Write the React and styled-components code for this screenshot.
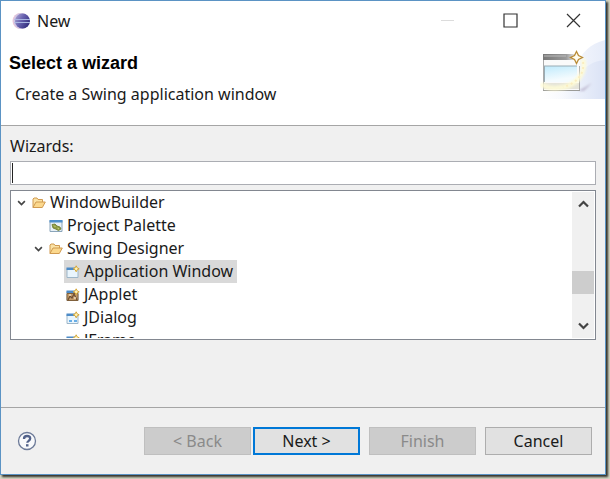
import React, { useState } from 'react'
import styled, { createGlobalStyle } from 'styled-components'

const treeItems = [
    { label: 'WindowBuilder', level: 0, icon: 'folder', open: true },
    { label: 'Project Palette', level: 1, icon: 'palette' },
    { label: 'Swing Designer', level: 1, icon: 'folder', open: true },
    { label: 'Application Window', level: 2, icon: 'window' },
    { label: 'JApplet', level: 2, icon: 'applet' },
    { label: 'JDialog', level: 2, icon: 'dialog' },
    { label: 'JFrame', level: 2, icon: 'window' },
]

function App() {
    const [selected, setSelected] = useState('Application Window')
    const [filter, setFilter] = useState('')

    return (
        <Page>
            <GlobalStyle />
            <Dialog role="dialog" aria-label="New">
                <TitleBar>
                    <EclipseLogo />
                    <Caption>New</Caption>
                    <WindowButton type="button" aria-label="Minimize" disabled>
                        <svg width="15" height="15" viewBox="0 0 15 15">
                            <path d="M1 7.5h13" stroke="#dcdcdc" />
                        </svg>
                    </WindowButton>
                    <WindowButton type="button" aria-label="Maximize">
                        <svg width="15" height="15" viewBox="0 0 15 15">
                            <path d="M1 1h13v13H1z" fill="none" stroke="#333" strokeWidth="1.2" />
                        </svg>
                    </WindowButton>
                    <WindowButton type="button" aria-label="Close">
                        <svg width="15" height="15" viewBox="0 0 15 15">
                            <path d="M1 1l13 13M14 1L1 14" stroke="#333" strokeWidth="1.2" />
                        </svg>
                    </WindowButton>
                </TitleBar>
                <Header>
                    <HeaderText>
                        <H1>Select a wizard</H1>
                        <Description>Create a Swing application window</Description>
                    </HeaderText>
                    <WizardBanner />
                </Header>
                <Content>
                    <Label htmlFor="wizards">Wizards:</Label>
                    <FilterInput
                        id="wizards"
                        type="text"
                        value={filter}
                        onChange={(e) => setFilter(e.target.value)}
                    />
                    <TreeBox>
                        <Tree role="tree" aria-label="Wizards">
                            {treeItems.map((item) => (
                                <Row
                                    key={item.label}
                                    role="treeitem"
                                    aria-level={item.level + 1}
                                    aria-selected={selected === item.label}
                                    $level={item.level}
                                    onClick={() => setSelected(item.label)}
                                >
                                    <Twisty>
                                        {item.open && <Chevron width={9} height={6} />}
                                    </Twisty>
                                    <RowLabel $selected={selected === item.label}>
                                        <ItemIcon name={item.icon} />
                                        <RowText>{item.label}</RowText>
                                    </RowLabel>
                                </Row>
                            ))}
                        </Tree>
                        <ScrollBar>
                            <ScrollButton type="button" aria-label="Scroll up">
                                <Chevron width={11} height={8} up />
                            </ScrollButton>
                            <ScrollTrack>
                                <ScrollThumb />
                            </ScrollTrack>
                            <ScrollButton type="button" aria-label="Scroll down">
                                <Chevron width={11} height={8} />
                            </ScrollButton>
                        </ScrollBar>
                    </TreeBox>
                </Content>
                <Footer>
                    <HelpButton type="button" aria-label="Help">
                        <HelpIcon />
                    </HelpButton>
                    <ButtonPair>
                        <Button type="button" disabled>&lt; Back</Button>
                        <Button type="button" $primary>Next &gt;</Button>
                    </ButtonPair>
                    <Button type="button" disabled>Finish</Button>
                    <Button type="button">Cancel</Button>
                </Footer>
            </Dialog>
        </Page>
    )
}

function Chevron({ width, height, up }) {
    return (
        <svg width={width} height={height} viewBox="0 0 11 8">
            <path
                d={up ? 'M1 6.5L5.5 2 10 6.5' : 'M1 1.5L5.5 6 10 1.5'}
                fill="none"
                stroke="#444"
                strokeWidth="2.2"
            />
        </svg>
    )
}

function EclipseLogo() {
    return (
        <svg width="20" height="18" viewBox="0 0 20 18">
            <defs>
                <linearGradient id="ball" x1="0" y1="0" x2="1" y2="0.6">
                    <stop offset="0" stopColor="#b5add8" />
                    <stop offset="0.5" stopColor="#6963b0" />
                    <stop offset="1" stopColor="#343080" />
                </linearGradient>
            </defs>
            <circle cx="9.5" cy="9" r="8" fill="#edc6d8" />
            <circle cx="10.5" cy="9" r="8" fill="#cfc6e4" />
            <circle cx="11.5" cy="9" r="7.5" fill="url(#ball)" />
            <path d="M3.5 7.5h15.500M3.5 10.500h15.500" stroke="#a9b6e2" />
        </svg>
    )
}

function WizardBanner() {
    return (
        <Banner width="65" height="60" viewBox="0 0 65 60" aria-hidden="true">
            <defs>
                <linearGradient id="swoosh" x1="0" y1="0" x2="1" y2="0">
                    <stop offset="0" stopColor="#fff" />
                    <stop offset="0.6" stopColor="#f1f4fc" />
                    <stop offset="1" stopColor="#e6ecf9" />
                </linearGradient>
                <linearGradient id="inner" x1="0" y1="0" x2="1" y2="0">
                    <stop offset="0" stopColor="#fff" stopOpacity="0" />
                    <stop offset="0.4" stopColor="#eef2fb" />
                    <stop offset="1" stopColor="#dae2f5" />
                </linearGradient>
                <linearGradient id="bar" x1="0" y1="0" x2="1" y2="0">
                    <stop offset="0" stopColor="#777" />
                    <stop offset="0.7" stopColor="#9a9a9a" />
                    <stop offset="1" stopColor="#eee" />
                </linearGradient>
                <linearGradient id="pane" x1="0" y1="0" x2="0.3" y2="1">
                    <stop offset="0" stopColor="#bfeafc" />
                    <stop offset="0.9" stopColor="#f4fbfe" />
                </linearGradient>
                <filter id="soft" x="-30%" y="-30%" width="160%" height="160%">
                    <feGaussianBlur stdDeviation="1.2" />
                </filter>
            </defs>
            <path d="M65 0C50 4 42 12 36 26L2 53v6h63z" fill="url(#swoosh)" />
            <path d="M65 20c-12 1-20 6-26 16-5 8-14 17-27 23h53z" fill="url(#inner)" />
            <path d="M38 51l14-8-8 8z" fill="#c3bfd6" filter="url(#soft)" />
            <path d="M3 15h37v36H3z" fill="#fafafa" />
            <path d="M3.500 15v36M39.500 26v25" stroke="#aaa" />
            <path d="M3 14h33v6H3z" fill="url(#bar)" />
            <path d="M4 16h22" stroke="#bbb" />
            <path d="M4 26h33v16H4z" fill="url(#pane)" />
            <path d="M4 26h33M4.500 26v16" stroke="#9aacb4" fill="none" />
            <path d="M4 43h35v6H4z" fill="#e5e4d9" />
            <path d="M3 50.500h37" stroke="#9b9b98" />
            <path d="M43 19c4 15-8 28-25 29-7 1-13-1-17-4" fill="none" stroke="#fffcd6" strokeWidth="5" opacity="0.85" filter="url(#soft)" />
            <path d="M43 22c2 13-8 22-20 25" fill="none" stroke="#faedc0" strokeWidth="2" strokeDasharray="2 3" />
            <path d="M36.500 11.500l2 4 4 2-4 2-2 4-2-4-4-2 4-2z" fill="#fffdf0" stroke="#b98b34" strokeWidth="1.300" />
        </Banner>
    )
}

function ItemIcon({ name }) {
    if (name === 'folder') {
        return (
            <svg width="14" height="14" viewBox="0 0 14 14">
                <path d="M1 11.500V3l1-1h3l1 1.500h4.500V6" fill="#fbe3a6" stroke="#d09a50" />
                <path d="M1 11.500L4 6h9.300l-3 5.500z" fill="#fbd88d" stroke="#d09a50" strokeLinejoin="round" />
            </svg>
        )
    }

    if (name === 'palette') {
        return (
            <svg width="14" height="14" viewBox="0 0 14 14">
                <path d="M1 1.500h12v11H1z" fill="#e8f0f7" stroke="#8aa5ba" />
                <path d="M0.500 1h13v2.500h-13z" fill="#4d8fcb" />
                <path d="M3 5.500l3-.5 2 2 3 1 1 2-2.500 1.500-3-1.500L4 9z" fill="#8c9a45" stroke="#6b7829" strokeWidth="0.800" />
                <path d="M5 6.500l1.500 1.500M8.500 9l1.500 1" stroke="#d0d77c" />
            </svg>
        )
    }

    return (
        <svg width="14" height="14" viewBox="0 0 14 14">
            <path d="M1 3.500h11v9H1z" fill="#e9f5fd" stroke="#9db6c9" />
            <path d="M0.500 2.500H9v2.500H0.500z" fill="#4d8bc7" />
            {name === 'dialog' && <path d="M3 10h3M8 10h3" stroke="#3e97e0" strokeWidth="1.500" />}
            {name === 'applet' && (
                <>
                    <path d="M1 5.500h11v7H1z" fill="#c39a68" stroke="#80603c" />
                    <path d="M2 12l2-4 2 2 2-4 3 6" fill="none" stroke="#6b4d32" strokeWidth="1.200" />
                    <path d="M3 7h2M8 10h2" stroke="#f1dfc0" strokeWidth="1.500" />
                </>
            )}
            <path d="M10.200 0.800l1 2 2 1-2 1-1 2-1-2-2-1 2-1z" fill="#fff3b8" stroke="#d6a637" />
        </svg>
    )
}

function HelpIcon() {
    return (
        <svg width="20" height="20" viewBox="0 0 20 20">
            <circle cx="10" cy="10" r="8.500" fill="#f8f9fb" stroke="#6c7a98" strokeWidth="1.300" />
            <path d="M7 8c0-2 1.300-3 3-3s3.200 1 3.200 2.600c0 2.200-2.900 2.200-2.900 4.200" fill="none" stroke="#52628a" strokeWidth="2.300" />
            <path d="M9 13.200h2.500v2.300H9z" fill="#52628a" />
        </svg>
    )
}

const GlobalStyle = createGlobalStyle`
    * {
        box-sizing: border-box;
    }

    body {
        margin: 0;
        background: #d6d6c2;
        color: #1a1a1a;
        font-family: 'Noto Sans', 'Open Sans', sans-serif;
        font-size: 16px;
        line-height: 22px;
    }

    button, input {
        font: inherit;
        color: inherit;
    }

    svg {
        display: block;
        flex: none;
    }
`

const Page = styled.div`
    display: flex;
    min-height: 100vh;
    padding: 0 4px 4px 0;
`

const Dialog = styled.div`
    flex: 1;
    display: flex;
    flex-direction: column;
    min-width: 0;
    background: #f0f0f0;
    border: 1px solid #5b93c4;
    box-shadow: 2px 2px 2px #33332b;
`

const TitleBar = styled.div`
    display: flex;
    align-items: center;
    height: 39px;
    padding-left: 10px;
    background: #fff;
`

const Caption = styled.span`
    flex: 1;
    padding-left: 6px;
`

const WindowButton = styled.button`
    display: flex;
    align-items: center;
    justify-content: center;
    width: 63px;
    height: 38px;
    padding: 0;
    border: 0;
    background: none;
`

const Header = styled.header`
    display: flex;
    justify-content: space-between;
    height: 86px;
    background: #fff;
    border-bottom: 1px solid #a5a5a5;
`

const HeaderText = styled.div`
    padding: 12px 0 0 8px;
`

const H1 = styled.h1`
    margin: 0;
    color: #000;
    font-family: 'Liberation Sans', Arial, sans-serif;
    font-size: 18px;
    line-height: 22px;
`

const Description = styled.p`
    margin: 9px 0 0 6px;
`

const Banner = styled.svg`
    display: block;
`

const Content = styled.main`
    flex: 1;
    display: flex;
    flex-direction: column;
    padding: 9px 9px 0;
`

const Label = styled.label`
    margin-bottom: 4px;
`

const FilterInput = styled.input`
    width: 100%;
    height: 24px;
    padding: 0 4px;
    border: 1px solid #abadb3;
    outline: 0;
    background: linear-gradient(#222, #222) 1px 1px / 1px 20px no-repeat #fff;
`

const TreeBox = styled.div`
    display: flex;
    height: 150px;
    margin-top: 5px;
    padding: 1px;
    border: 1px solid #828790;
    background: #fff;
`

const Tree = styled.div`
    flex: 1;
    overflow: hidden;
`

const Row = styled.div`
    display: flex;
    align-items: center;
    height: 23px;
    padding-left: ${({ $level }) => $level * 17}px;
    cursor: default;

    &:first-child {
        height: 22px;
    }
`

const Twisty = styled.span`
    display: flex;
    justify-content: center;
    width: 18px;
`

const RowLabel = styled.span`
    display: flex;
    align-items: center;
    gap: 4px;
    height: 23px;
    padding: 0 4px 0 2px;
    white-space: nowrap;
    background: ${({ $selected }) => ($selected ? '#d9d9d9' : 'transparent')};
`

const RowText = styled.span`
    padding-bottom: 2px;
    line-height: 20px;
`

const ScrollBar = styled.div`
    display: flex;
    flex-direction: column;
    width: 22px;
    background: #f0f0f0;
`

const ScrollButton = styled.button`
    display: flex;
    align-items: center;
    justify-content: center;
    height: 24px;
    padding: 0;
    border: 0;
    background: none;
`

const ScrollTrack = styled.div`
    flex: 1;
    display: flex;
    flex-direction: column;
    justify-content: flex-end;
    padding-bottom: 20px;
`

const ScrollThumb = styled.div`
    height: 23px;
    background: #cdcdcd;
`

const Footer = styled.footer`
    display: flex;
    align-items: center;
    gap: 9px;
    height: 67px;
    padding: 0 13px 0 16px;
    border-top: 1px solid #a5a5a5;
`

const HelpButton = styled.button`
    margin-right: auto;
    padding: 0;
    border: 0;
    background: none;
`

const ButtonPair = styled.div`
    display: flex;
    gap: 2px;
`

const Button = styled.button`
    width: 107px;
    height: 28px;
    padding: 0;
    border: ${({ $primary }) => ($primary ? '2px solid #0078d7' : '1px solid #adadad')};
    background: #e1e1e1;
    line-height: 22px;

    &:disabled {
        color: #8a8a8a;
        border-color: #bfbfbf;
        background: #ccc;
    }
`

export default App
